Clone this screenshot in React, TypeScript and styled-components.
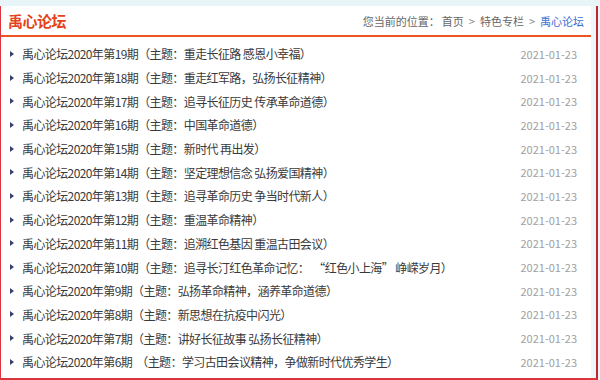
import React from 'react';
import styled, { createGlobalStyle } from 'styled-components';

const GlobalStyle = createGlobalStyle`
  html, body {
    margin: 0;
    padding: 0;
    background: #e7f5f9;
    font-family: "Noto Sans CJK SC", "Liberation Sans", sans-serif;
  }
`;

const Frame = styled.div`
  margin-top: 6px;
  width: 598px;
  height: 374px;
  box-sizing: border-box;
  border-left: 1px solid #d9363e;
  border-right: 2px solid #b8282e;
  border-bottom: 2px solid #d9363e;
  background: #eef6f9;
  display: flex;
`;

const Panel = styled.div`
  flex: 1;
  margin-right: 5px;
  background: #fff;
  display: flex;
  flex-direction: column;
`;

const Header = styled.div`
  height: 29px;
  display: flex;
  align-items: center;
  justify-content: space-between;
  padding: 0 7px;
  border-bottom: 2px solid #ee5520;
`;

const Title = styled.h2`
  margin: 0;
  font-size: 15px;
  font-weight: bold;
  color: #e4431a;
  letter-spacing: -0.5px;
`;

const Crumbs = styled.div`
  font-size: 11px;
  color: #666;
  display: flex;
  align-items: center;
`;

const Crumb = styled.span<{ $current?: boolean }>`
  color: ${(p) => (p.$current ? '#3b6fd9' : '#666')};
`;

const Sep = styled.span`
  margin: 0 5px;
  color: #888;
`;

const Here = styled.span`
  margin-right: 2px;
`;

const List = styled.ul`
  list-style: none;
  margin: 0;
  padding: 5px 14px 0 8px;
`;

const Row = styled.li`
  height: 23.7px;
  display: flex;
  align-items: center;
  font-size: 12px;
`;

const Bullet = styled.span`
  width: 0;
  height: 0;
  border-top: 3.5px solid transparent;
  border-bottom: 3.5px solid transparent;
  border-left: 4px solid #3a3f6b;
  margin: 0 8px 0 1px;
`;

const Link = styled.span`
  flex: 1;
  color: #3a3a3a;
  white-space: pre;
  letter-spacing: -0.6px;
`;

const Date = styled.span`
  color: #a0a0a0;
  font-size: 11px;
`;

const items = [
  '禹心论坛2020年第19期（主题：重走长征路 感恩小幸福）',
  '禹心论坛2020年第18期（主题：重走红军路，弘扬长征精神）',
  '禹心论坛2020年第17期（主题：追寻长征历史 传承革命道德）',
  '禹心论坛2020年第16期（主题：中国革命道德）',
  '禹心论坛2020年第15期（主题：新时代 再出发）',
  '禹心论坛2020年第14期（主题：坚定理想信念 弘扬爱国精神）',
  '禹心论坛2020年第13期（主题：追寻革命历史 争当时代新人）',
  '禹心论坛2020年第12期（主题：重温革命精神）',
  '禹心论坛2020年第11期（主题：追溯红色基因 重温古田会议）',
  '禹心论坛2020年第10期（主题：追寻长汀红色革命记忆：  “红色小上海” 峥嵘岁月）',
  '禹心论坛2020年第9期（主题：弘扬革命精神，涵养革命道德）',
  '禹心论坛2020年第8期（主题：新思想在抗疫中闪光）',
  '禹心论坛2020年第7期（主题：讲好长征故事 弘扬长征精神）',
  '禹心论坛2020年第6期  （主题：学习古田会议精神，争做新时代优秀学生）',
];

export default function App() {
  return (
    <>
      <GlobalStyle />
      <Frame>
        <Panel>
          <Header>
            <Title>禹心论坛</Title>
            <Crumbs>
              <Here>您当前的位置：</Here>
              <Crumb>首页</Crumb>
              <Sep>&gt;</Sep>
              <Crumb>特色专栏</Crumb>
              <Sep>&gt;</Sep>
              <Crumb $current>禹心论坛</Crumb>
            </Crumbs>
          </Header>
          <List>
            {items.map((t) => (
              <Row key={t}>
                <Bullet />
                <Link>{t}</Link>
                <Date>2021-01-23</Date>
              </Row>
            ))}
          </List>
        </Panel>
      </Frame>
    </>
  );
}
